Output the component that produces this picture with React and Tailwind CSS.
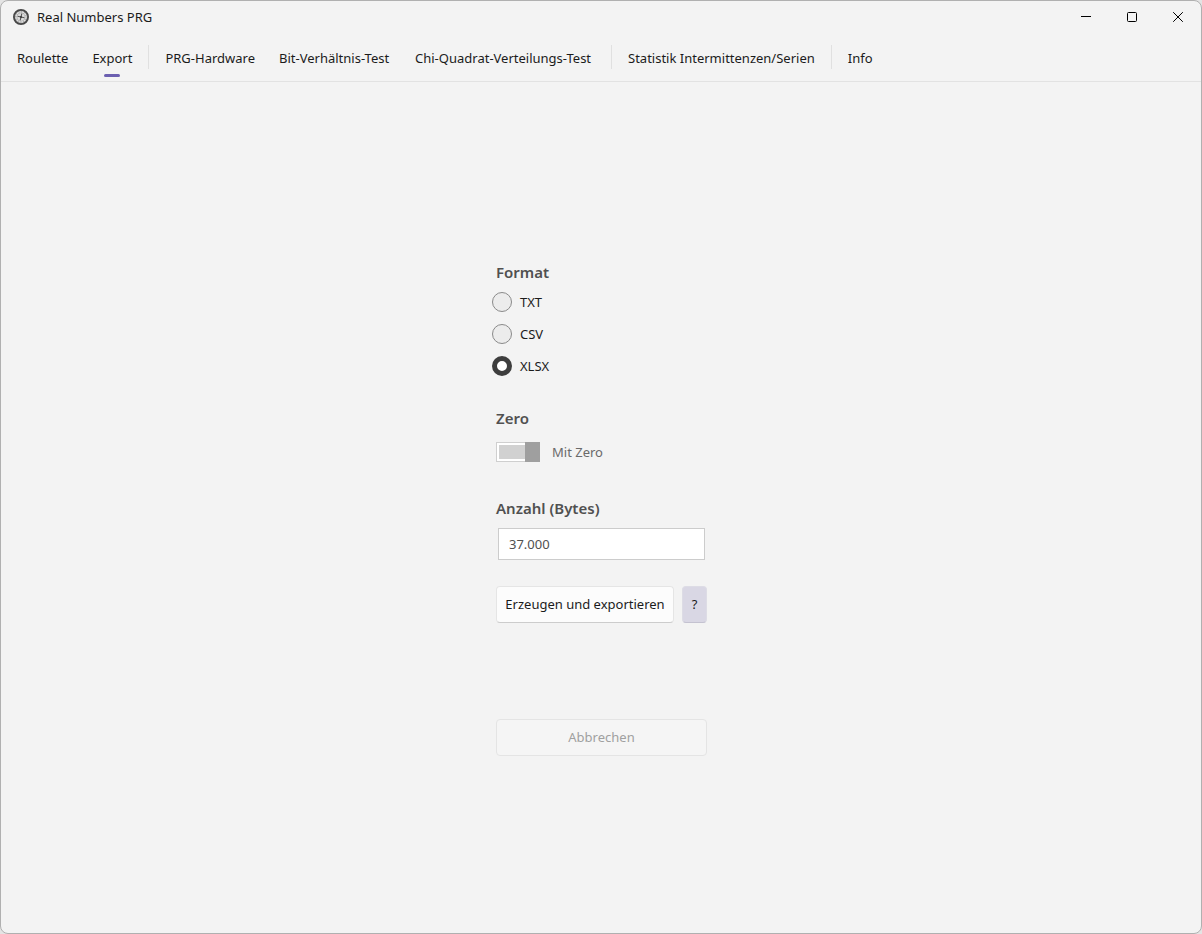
import { useState } from 'react';

const tabGroups = [
  [{ name: 'Roulette' }, { name: 'Export' }],
  [
    { name: 'PRG-Hardware' },
    { name: 'Bit-Verhältnis-Test', width: 'min-w-[136px]' },
    { name: 'Chi-Quadrat-Verteilungs-Test', width: 'min-w-[204px]' },
  ],
  [{ name: 'Statistik Intermittenzen/Serien' }],
  [{ name: 'Info' }],
];

const formats = ['TXT', 'CSV', 'XLSX'];

const RouletteIcon = () => (
  <svg viewBox="0 0 16 16" className="w-4 h-4" aria-hidden="true">
    <circle cx="8" cy="8" r="7.1" fill="#8a8a8a" stroke="#484848" strokeWidth="1.8" />
    <circle cx="8" cy="8" r="5.1" fill="#a8a8a8" stroke="#e4e4e4" strokeWidth="1.3" strokeDasharray="2.2 0.5" />
    <circle cx="8" cy="8" r="3.7" fill="#dcdcdc" />
    <path d="M4.6 7.2 11.4 8.8M8.8 4.6 7.2 11.4" stroke="#555" strokeWidth="1.1" />
    <circle cx="8" cy="8" r="1.1" fill="#3c3c3c" />
  </svg>
);

const TitleBar = () => (
  <header className="flex h-8 items-center justify-between">
    <div className="flex items-center gap-2 pl-3">
      <RouletteIcon />
      <h1 className="text-[13px] leading-5">Real Numbers PRG</h1>
    </div>
    <div className="flex h-full">
      <button type="button" aria-label="Minimieren" className="flex w-[46px] items-center justify-center">
        <svg viewBox="0 0 10 10" className="w-[10px] h-[10px]">
          <path d="M0 4.5h10" stroke="#000" />
        </svg>
      </button>
      <button type="button" aria-label="Maximieren" className="flex w-[46px] items-center justify-center">
        <svg viewBox="0 0 10 10" className="w-[10px] h-[10px]">
          <rect x="0.5" y="0.5" width="9" height="9" rx="1" fill="none" stroke="#000" />
        </svg>
      </button>
      <button type="button" aria-label="Schließen" className="flex w-[46px] items-center justify-center">
        <svg viewBox="0 0 10 10" className="w-[10px] h-[10px]">
          <path d="M0.2 0.2 9.8 9.8M9.8 0.2 0.2 9.8" stroke="#000" />
        </svg>
      </button>
    </div>
  </header>
);

const TabBar = ({ active, onSelect }) => (
  <nav className="flex items-center border-b border-[#e2e2e2] pt-1 pb-1 pl-1">
    {tabGroups.map((group, i) => (
      <div key={group[0].name} className="flex items-center">
        {i > 0 && <span className="mx-1 h-6 w-px bg-[#e0e0e0]" />}
        {group.map(({ name, width = '' }) => (
          <button
            key={name}
            type="button"
            onClick={() => onSelect(name)}
            className={`relative h-10 px-3 pt-0.5 text-left text-[13px] leading-5 whitespace-nowrap ${width}`}
          >
            {name}
            {name === active && (
              <span className="absolute bottom-0 left-1/2 h-[3px] w-4 -translate-x-1/2 rounded-full bg-[#6b5fb0]" />
            )}
          </button>
        ))}
      </div>
    ))}
  </nav>
);

const ExportForm = () => {
  const [format, setFormat] = useState('XLSX');
  const [zero, setZero] = useState(true);
  const [count, setCount] = useState('37.000');

  return (
    <form className="flex w-[211px] flex-col" onSubmit={(e) => e.preventDefault()}>
      <fieldset>
        <legend className="text-[15px] leading-5 font-semibold text-[#505050]">Format</legend>
        <div className="mt-1 -ml-1 flex flex-col">
          {formats.map((name) => (
            <label key={name} className="flex h-8 items-center gap-2 text-[13px] leading-5">
              <input
                type="radio"
                name="format"
                value={name}
                checked={format === name}
                onChange={() => setFormat(name)}
                className="h-5 w-5 appearance-none rounded-full border border-[#8a8a8a] bg-[#ececec] checked:border-5 checked:border-[#3d3d3d] checked:bg-white"
              />
              {name}
            </label>
          ))}
        </div>
      </fieldset>

      <fieldset className="mt-[26px]">
        <legend className="text-[15px] leading-5 font-semibold text-[#505050]">Zero</legend>
        <label className="mt-[14px] flex h-5 items-center gap-3 text-[13px] leading-5 text-[#6a6a6a]">
          <span className="relative flex h-5 w-11 border border-[#cfcfcf] bg-white p-[2px]">
            <input
              type="checkbox"
              checked={zero}
              onChange={(e) => setZero(e.target.checked)}
              className="peer h-full w-full appearance-none checked:bg-[#d1d1d1]"
            />
            <span className="pointer-events-none absolute -top-px -left-px h-5 w-[15px] bg-[#9f9f9f] peer-checked:-right-px peer-checked:left-auto" />
          </span>
          {zero ? 'Mit Zero' : 'Ohne Zero'}
        </label>
      </fieldset>

      <label htmlFor="count" className="mt-9 text-[15px] leading-5 font-semibold text-[#505050]">
        Anzahl (Bytes)
      </label>
      <input
        id="count"
        type="text"
        value={count}
        onChange={(e) => setCount(e.target.value)}
        className="mx-[2px] mt-[10px] h-8 border border-[#cccccc] bg-white px-[10px] text-[13px] leading-5 text-[#505050] outline-none"
      />

      <div className="mt-[26px] flex gap-2">
        <button
          type="submit"
          className="h-[37px] flex-1 rounded border border-[#e5e5e5] border-b-[#cccccc] bg-[#fcfcfc] text-[13px] leading-5 whitespace-nowrap"
        >
          Erzeugen und exportieren
        </button>
        <button
          type="button"
          aria-label="Hilfe"
          className="h-[37px] w-[25px] rounded border border-[#dddce5] border-b-[#c4c2d0] bg-[#d9d7e4] text-[13px] leading-5"
        >
          ?
        </button>
      </div>

      <button
        type="button"
        disabled
        className="mt-24 h-[37px] rounded border border-[#e4e4e4] bg-[#f5f5f5] text-[13px] leading-5 text-[#a0a0a0]"
      >
        Abbrechen
      </button>
    </form>
  );
};

const App = () => {
  const [tab, setTab] = useState('Export');

  return (
    <div className="flex min-h-screen bg-[#e4e4e4] font-['Noto_Sans','Open_Sans',sans-serif] text-[#1b1b1b]">
      <div className="flex flex-1 flex-col rounded-lg border border-[#b0b0b0] bg-[#f3f3f3]">
        <TitleBar />
        <TabBar active={tab} onSelect={setTab} />
        <main className="flex flex-1 items-center justify-center pt-0.5 pl-px">
          <ExportForm />
        </main>
      </div>
    </div>
  );
};

export default App;
